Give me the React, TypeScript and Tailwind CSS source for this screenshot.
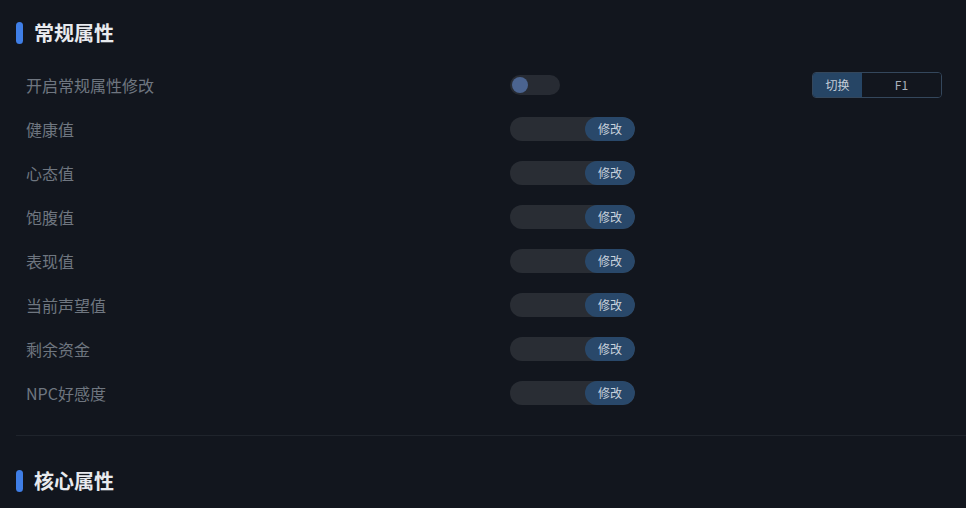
import React from "react";

const rows = ["健康值", "心态值", "饱腹值", "表现值", "当前声望值", "剩余资金", "NPC好感度"];

function Header({ title }: { title: string }) {
  return (
    <div className="flex items-center h-[26px]">
      <div className="w-[7px] h-[22px] rounded-full bg-[#3f7ee6]" />
      <div className="ml-[11px] text-[20px] leading-[26px] font-bold text-[#e8eaee]">{title}</div>
    </div>
  );
}

export default function App() {
  return (
    <div
      className="w-[966px] h-[508px] overflow-hidden bg-[#12161e] pl-[16px] pt-[20px]"
      style={{ fontFamily: '"Noto Sans CJK SC", "Noto Sans", sans-serif' }}
    >
      <Header title="常规属性" />
      <div className="mt-[17px]">
        <div className="flex items-center h-[44px] pl-[10px] pr-[24px]">
          <div className="w-[484px] text-[16px] text-[#6f7680]">开启常规属性修改</div>
          <div className="w-[50px] h-[20px] rounded-full bg-[#272b33] flex items-center pl-[2px]">
            <div className="w-[16px] h-[16px] rounded-full bg-[#4b6490]" />
          </div>
          <div className="flex-1" />
          <div className="flex h-[26px] w-[130px] rounded-[4px] border border-[#34475c] overflow-hidden text-[12px]">
            <div className="w-[49px] bg-[#264565] text-[#c4cdd8] flex items-center justify-center">切换</div>
            <div className="flex-1 bg-[#12161e] text-[#aab2bc] flex items-center justify-center">F1</div>
          </div>
        </div>
        {rows.map((r) => (
          <div key={r} className="flex items-center h-[44px] pl-[10px] pr-[24px]">
            <div className="w-[484px] text-[16px] text-[#6f7680]">{r}</div>
            <div className="flex h-[24px] w-[125px] rounded-full bg-[#292d34] overflow-hidden">
              <div className="flex-1" />
              <div className="w-[50px] rounded-full bg-[#29486a] text-[12px] text-[#c8d2dd] flex items-center justify-center">
                修改
              </div>
            </div>
          </div>
        ))}
      </div>
      <div className="mt-[20px] h-px bg-[#1f242c]" />
      <div className="mt-[32px]">
        <Header title="核心属性" />
      </div>
    </div>
  );
}
